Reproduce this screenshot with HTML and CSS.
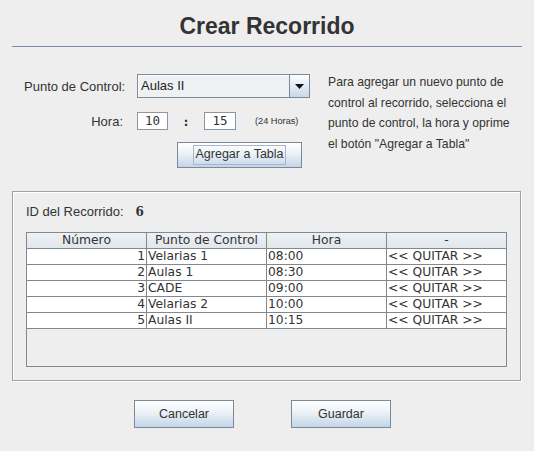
FILE: index.html
```html
<!DOCTYPE html>
<html lang="es">
<head>
<meta charset="utf-8">
<title>Crear Recorrido</title>
<link rel="stylesheet" href="styles.css">
</head>
<body>
<div class="window">
  <h1 class="title">Crear Recorrido</h1>
  <div class="sep"></div>

  <div class="form">
    <div class="fields">
      <div class="row row-combo">
        <span class="lbl lbl-punto">Punto de Control:</span>
        <div class="combo">
          <span class="combo-val">Aulas II</span>
          <span class="combo-btn">
            <svg width="9" height="5" viewBox="0 0 9 5"><path d="M0 0H9L4.5 5Z" fill="#111"/></svg>
          </span>
        </div>
      </div>
      <div class="row row-hora">
        <span class="lbl lbl-hora">Hora:</span>
        <span class="tf">10</span>
        <span class="colon">:</span>
        <span class="tf tf2">15</span>
        <span class="hint">(24 Horas)</span>
      </div>
      <div class="row row-btn">
        <button class="btn btn-add"><span class="focus">Agregar a Tabla</span></button>
      </div>
    </div>
    <p class="help">Para agregar un nuevo punto de<br>control al recorrido, selecciona el<br>punto de control, la hora y oprime<br>el botón "Agregar a Tabla"</p>
  </div>

  <section class="panel">
    <div class="idrow"><span class="idlbl">ID del Recorrido:</span><span class="idval">6</span></div>
    <div class="pane">
      <div class="trow thead">
        <div class="cell">Número</div>
        <div class="cell">Punto de Control</div>
        <div class="cell">Hora</div>
        <div class="cell last">-</div>
      </div>
      <div class="trow">
        <div class="cell num">1</div><div class="cell">Velarias 1</div><div class="cell">08:00</div><div class="cell last">&lt;&lt; QUITAR &gt;&gt;</div>
      </div>
      <div class="trow">
        <div class="cell num">2</div><div class="cell">Aulas 1</div><div class="cell">08:30</div><div class="cell last">&lt;&lt; QUITAR &gt;&gt;</div>
      </div>
      <div class="trow">
        <div class="cell num">3</div><div class="cell">CADE</div><div class="cell">09:00</div><div class="cell last">&lt;&lt; QUITAR &gt;&gt;</div>
      </div>
      <div class="trow">
        <div class="cell num">4</div><div class="cell">Velarias 2</div><div class="cell">10:00</div><div class="cell last">&lt;&lt; QUITAR &gt;&gt;</div>
      </div>
      <div class="trow">
        <div class="cell num">5</div><div class="cell">Aulas II</div><div class="cell">10:15</div><div class="cell last">&lt;&lt; QUITAR &gt;&gt;</div>
      </div>
    </div>
  </section>

  <div class="actions">
    <button class="btn btn-lg">Cancelar</button>
    <button class="btn btn-lg">Guardar</button>
  </div>
</div>
</body>
</html>
```

FILE: styles.css
```css
* { box-sizing: border-box; }

html, body {
  margin: 0;
  padding: 0;
  background: #eeeeee;
}

body {
  font-family: "Liberation Sans", Arial, sans-serif;
  color: #333333;
  width: 534px;
  height: 451px;
  overflow: hidden;
}

.window {
  display: flex;
  flex-direction: column;
}

.title {
  margin: 13px 0 0 0;
  font-size: 23px;
  line-height: 26px;
  font-weight: bold;
  text-align: center;
  color: #333333;
}

.sep {
  margin: 7px 12px 0 12px;
  border-top: 1px solid #7d8cad;
  height: 0;
}

/* ---------- top form ---------- */
.form {
  display: flex;
  padding: 25px 0 0 24px;
}

.fields {
  width: 286px;
  flex: none;
  padding-top: 2px;
  display: flex;
  flex-direction: column;
}

.row {
  display: flex;
  align-items: center;
}

.lbl {
  font-size: 13px;
  line-height: 15px;
  text-align: right;
  color: #333333;
  white-space: nowrap;
  flex: none;
}

.lbl-punto {
  width: 101px;
  margin-right: 12px;
}

.combo {
  width: 173px;
  height: 24px;
  flex: none;
  border: 1px solid #7a8a99;
  background: #eef0f2;
  display: flex;
  box-shadow: inset 1px 1px 0 #ffffff;
}

.combo-val {
  flex: 1;
  font-size: 13px;
  line-height: 22px;
  padding-left: 3px;
  color: #222222;
}

.combo-btn {
  width: 20px;
  border-left: 1px solid #7a8a99;
  background: linear-gradient(#ffffff, #dde7f1 60%, #c9d9ea);
  display: flex;
  align-items: center;
  justify-content: center;
}

.row-hora {
  margin-top: 14px;
}

.lbl-hora {
  width: 100px;
  margin-right: 13px;
  padding-right: 1px;
}

.tf {
  width: 31px;
  height: 18px;
  flex: none;
  border: 1px solid #8a96a3;
  background: #ffffff;
  font-family: "DejaVu Sans Mono", monospace;
  font-size: 12.5px;
  line-height: 16px;
  text-align: center;
  color: #333333;
}

.tf2 {
  width: 32px;
}

.colon {
  width: 36px;
  text-align: center;
  font-family: "DejaVu Sans Mono", monospace;
  font-size: 12.5px;
  font-weight: bold;
  color: #333333;
}

.hint {
  margin-left: 19px;
  font-size: 9.2px;
  color: #333333;
  white-space: nowrap;
}

.row-btn {
  margin-top: 12px;
  padding-left: 153px;
}

.btn {
  border: 1px solid #7a8a99;
  background: linear-gradient(#ffffff, #eef3f8 40%, #c3d5e8);
  font-family: "Liberation Sans", Arial, sans-serif;
  color: #333333;
  padding: 0;
  margin: 0;
}

.btn-add {
  width: 125px;
  height: 26px;
  font-size: 12.5px;
  display: flex;
  align-items: center;
  justify-content: center;
}

.focus {
  border: 1px solid #a6b7c9;
  padding: 1px 1px 2px 1px;
  line-height: 15px;
}

.help {
  margin: 0 0 0 18px;
  font-size: 12.2px;
  line-height: 20.7px;
  color: #333333;
  white-space: nowrap;
}

/* ---------- panel ---------- */
.panel {
  margin: 23px 13px 0 12px;
  height: 190px;
  border: 1px solid #a0a0a0;
  box-shadow: 1px 1px 0 #ffffff, inset 1px 1px 0 #ffffff;
  padding: 12px 13px 0 13px;
}

.idrow {
  display: flex;
  align-items: baseline;
  height: 15px;
  line-height: 15px;
}

.idlbl {
  font-size: 13px;
  color: #333333;
}

.idval {
  margin-left: 12px;
  font-family: "DejaVu Serif", serif;
  font-weight: bold;
  font-size: 12px;
  color: #333333;
}

.pane {
  margin-top: 13px;
  width: 481px;
  height: 135px;
  border: 1px solid #808890;
  background: #eeeeee;
  font-family: "DejaVu Sans", sans-serif;
  font-size: 12.3px;
  color: #333333;
}

.trow {
  display: grid;
  grid-template-columns: 120px 120px 120px 119px;
  height: 16px;
  background: #ffffff;
}

.cell {
  border-right: 1px solid #808890;
  border-bottom: 1px solid #808890;
  line-height: 15px;
  padding: 0 1px;
  white-space: nowrap;
  overflow: hidden;
}

.cell.last {
  border-right: none;
}

.cell.num {
  text-align: right;
}

.thead {
  background: linear-gradient(#eef1f4, #e1e6eb);
}

.thead .cell {
  text-align: center;
}

/* ---------- actions ---------- */
.actions {
  display: flex;
  gap: 57px;
  padding-left: 134px;
  margin-top: 19px;
}

.btn-lg {
  width: 100px;
  height: 28px;
  font-size: 12.5px;
}
```
